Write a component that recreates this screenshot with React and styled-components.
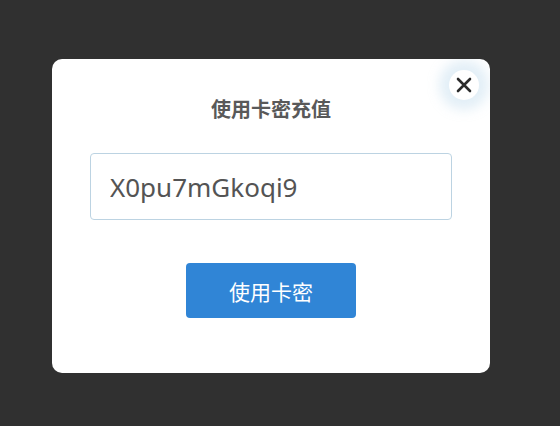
import styled, { createGlobalStyle } from 'styled-components';

const Global = createGlobalStyle`
    html, body {
        margin: 0;
        padding: 0;
        background: #303030;
    }
    body {
        font-family: "Noto Sans", "Noto Sans CJK SC", sans-serif;
    }
`;

const Backdrop = styled.div`
    width: 560px;
    height: 426px;
    box-sizing: border-box;
    padding: 59px 0 0 52px;
    background: #303030;
`;

const Dialog = styled.div`
    position: relative;
    width: 438px;
    height: 314px;
    box-sizing: border-box;
    background: #ffffff;
    border-radius: 10px;
    overflow: hidden;

    display: flex;
    flex-direction: column;
    align-items: center;
    padding-top: 36px;
`;

const CloseButton = styled.button`
    position: absolute;
    top: 11px;
    right: 11px;
    width: 30px;
    height: 30px;
    border: none;
    border-radius: 50%;
    background: #ffffff;
    box-shadow: 0 0 12px 10px rgba(175, 208, 232, 0.35);
    display: flex;
    align-items: center;
    justify-content: center;
    padding: 0;
    cursor: pointer;
`;

const Title = styled.h2`
    margin: 0;
    font-family: "Noto Sans CJK SC", sans-serif;
    font-size: 20px;
    font-weight: 700;
    color: #595959;
    line-height: 28px;
`;

const Input = styled.input`
    margin-top: 30px;
    width: 362px;
    height: 67px;
    box-sizing: border-box;
    border: 1px solid #bcd3e2;
    border-radius: 4px;
    padding: 0 19px;
    font-family: "Noto Sans", "Noto Sans CJK SC", sans-serif;
    font-size: 26px;
    color: #545454;
    outline: none;
`;

const Confirm = styled.button`
    margin-top: 43px;
    width: 170px;
    height: 55px;
    border: none;
    border-radius: 4px;
    background: #3085d6;
    color: #ffffff;
    font-family: "Noto Sans CJK SC", sans-serif;
    font-size: 21px;
    cursor: pointer;
`;

export default function App(){
    return (
        <Backdrop>
            <Global />
            <Dialog>
                <CloseButton aria-label="close">
                    <svg width="16" height="16" viewBox="0 0 16 16">
                        <path d="M2 2 L14 14 M14 2 L2 14" stroke="#2b2b2b" strokeWidth="2.6" strokeLinecap="round" />
                    </svg>
                </CloseButton>
                <Title>使用卡密充值</Title>
                <Input defaultValue="X0pu7mGkoqi9" />
                <Confirm>使用卡密</Confirm>
            </Dialog>
        </Backdrop>
    );
}
